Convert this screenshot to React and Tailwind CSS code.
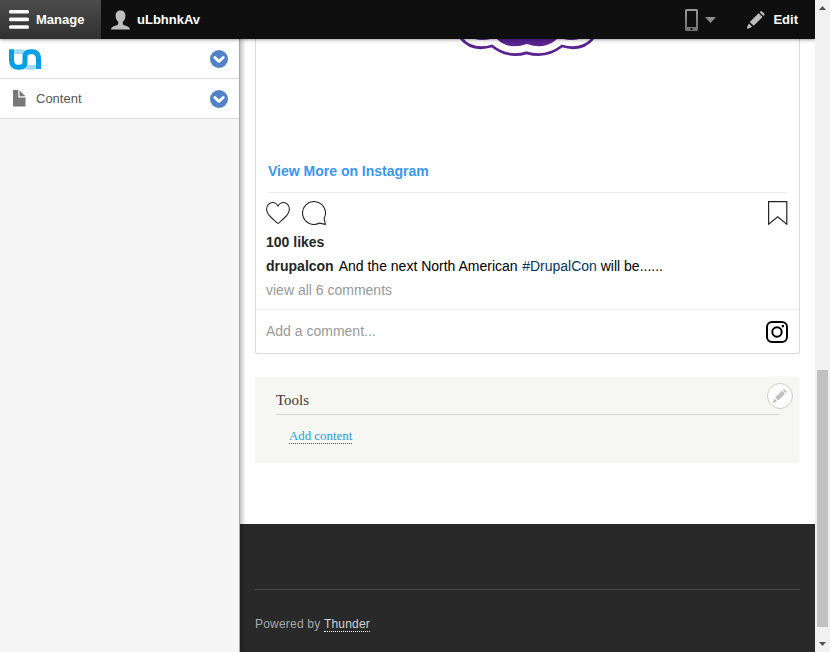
import React from "react";

function Toggle() {
  return (
    <svg width="18" height="18" viewBox="0 0 18 18" className="shrink-0">
      <circle cx="9" cy="9" r="9" fill="#5181c6" />
      <path d="M4.8 7.5 9 11.3l4.2-3.800" fill="none" stroke="#fff" strokeWidth="2.900" strokeLinecap="round" strokeLinejoin="round" />
    </svg>
  );
}

function Pencil({ size, color }) {
  return (
    <svg width={size} height={size} viewBox="0 0 18 18" fill={color} className="shrink-0">
      <path d="M12.600 1.200 13.500.4Q14.300-.2 15.100.5L17.100 2.500Q18 3.500 17.200 4.200L16.400 5ZM11.600 2.200 15.500 6 6.700 14.800 2.800 11ZM1.900 12.400 5.200 15.700 1.600 17.400.1 17.800V16Z" />
    </svg>
  );
}

function Header() {
  return (
    <header className="relative z-20 flex h-[39px] w-[815px] shrink-0 items-center bg-[#0f0f0f] text-[13px] font-bold text-white shadow-[0_0_4px_rgba(0,0,0,0.6)]">
      <div className="flex h-full w-[101px] items-center bg-linear-to-b from-[#4c4c4c] to-[#303030] pl-[9px]">
        <svg width="20" height="19" viewBox="0 0 20 19" fill="#fff">
          <rect width="20" height="3.600" rx="1.500" />
          <rect y="7.600" width="20" height="3.600" rx="1.500" />
          <rect y="15.200" width="20" height="3.600" rx="1.500" />
        </svg>
        <span className="ml-[7px]">Manage</span>
      </div>
      <svg width="19" height="20" viewBox="0 0 19 20" className="ml-[10px]" fill="#bebebe">
        <path d="M9.500.4C6.400.4 4.600 2.500 4.600 5.400c0 2.700 1.100 5.100 2.600 6.400v2.400C6.600 15.800.2 15.400 0 19.400h19c-.2-4-6.600-3.600-7.200-5.200v-2.400c1.500-1.300 2.600-3.700 2.600-6.400 0-2.900-1.800-5-4.900-5Z" />
      </svg>
      <span className="ml-[7px]">uLbhnkAv</span>
      <div className="ml-auto flex items-center">
        <svg width="32" height="22" viewBox="0 0 32 22">
          <defs>
            <linearGradient id="device" x2="0" y2="1">
              <stop stopColor="#999" />
              <stop offset="1" stopColor="#707070" />
            </linearGradient>
          </defs>
          <path fill="url(#device)" fillRule="evenodd" d="M1.500 0h10Q13 0 13 1.500v19q0 1.500-1.500 1.500h-10Q0 22 0 20.500v-19Q0 0 1.500 0ZM2 2v16h9V2Zm3.500 17v2h2v-2Z" />
          <path d="M20 8h11l-5.500 6Z" fill="#8c8c8c" />
        </svg>
        <div className="ml-[30px]"><Pencil size={18} color="#bebebe" /></div>
        <span className="mr-[17px] ml-[8px]">Edit</span>
      </div>
    </header>
  );
}

function Sidebar() {
  return (
    <aside className="z-10 w-[240px] shrink-0 border-r border-[#aaa] bg-[#f5f5f5] shadow-[0_0_5px_2px_rgba(0,0,0,0.3)]">
      <div className="flex h-[40px] items-center justify-between border-b border-[#ddd] bg-white pr-[11px] pl-[9px]">
        <svg width="32" height="21" viewBox="0 0 32 21" fill="none" className="mt-[2px]">
          <path d="M5 .8Q6.500.2 8 .2h4Q17 .2 19.500 4L16 8.500Q14.500 5 11 5H5ZM13.500 14.500Q16 16 19 16h8v4q-1 .8-2.500.8H20q-4.500 0-7-4Z" fill="#a2dafa" />
          <path d="M2.500.3V11Q2.500 18.200 9 18.200h1.500Q16 18.200 16 13V8Q16 2.800 21.500 2.800H23Q29.500 2.800 29.500 10v10" stroke="#059fe6" strokeWidth="5" />
        </svg>
        <Toggle />
      </div>
      <div className="flex h-[40px] items-center border-b border-[#ddd] bg-white pr-[11px] pl-[13px]">
        <svg width="13" height="17" viewBox="0 0 13 17" fill="#787878">
          <path d="M0 0h5.300v7.500h7.200V16.500H0ZM6.500.5l6 5.800h-6Z" />
        </svg>
        <span className="mr-auto ml-[10px] text-[13px] text-[#565656]">Content</span>
        <Toggle />
      </div>
    </aside>
  );
}

function Post() {
  return (
    <article className="h-[315px] shrink-0 rounded-b-[3px] border border-t-0 border-[#dbdbdb] text-[14px] leading-[24px]">
      <div className="h-[120px] pl-[199px]">
        <svg width="146" height="22" viewBox="0 0 146 22">
          <g fill="none" stroke="#5a2390" strokeWidth="2.800">
            <path d="M5-2Q16 13 37 7Q53 19.500 71.500 13.800Q91 19.500 107 7Q128 13 139-2" />
            <path d="M18-2Q26 .8 36-1.500M108-1.500Q118 .8 126-2" />
          </g>
          <path d="M41-1h62Q91 11.500 72 5Q52 11.500 41-1Z" fill="#5a2390" />
        </svg>
      </div>
      <div className="mx-[12px] h-[34px] border-b border-[#efefef] font-bold text-[#3897f0]">View More on Instagram</div>
      <div className="mx-[10px] flex h-[37px] pt-[8px]">
        <svg width="24" height="24" viewBox="0 0 24 24" fill="none" stroke="#262626" strokeWidth="1.100">
          <path d="M12 5C10.700 2.600 9 1.500 6.700 1.500 3.300 1.500.6 4.200.6 8.300c0 3.500 1.800 5.600 4.600 8.200 2.400 2.200 4.400 4.100 6.200 5.700q.6.5 1.200 0c1.800-1.600 3.800-3.500 6.200-5.700 2.800-2.600 4.600-4.700 4.600-8.200 0-4.100-2.700-6.800-6.100-6.800C15 1.500 13.300 2.600 12 5Z" />
        </svg>
        <svg width="24" height="24" viewBox="0 0 24 24" fill="none" stroke="#262626" strokeWidth="1.100" className="ml-[12px]">
          <path d="M22.100 17.400A11.450 11.450 0 1 0 17.400 22.100L23.400 23.400Z" strokeLinejoin="round" />
        </svg>
        <svg width="20" height="24" viewBox="0 0 20 24" fill="none" stroke="#262626" strokeWidth="1.200" className="mr-[1px] ml-auto">
          <path d="M.6.600h18.200V23.200L9.700 15.700.6 23.200Z" />
        </svg>
      </div>
      <div className="h-[80px] border-b border-[#efefef] px-[10px]">
        <div className="font-bold text-[#262626]">100 likes</div>
        <div className="text-black"><b className="mr-[5px] text-[#262626]">drupalcon</b>And the next North American <span className="ml-[0.6px] text-[#003569]">#DrupalCon</span> will be......</div>
        <div className="text-[#999]">view all 6 comments</div>
      </div>
      <div className="flex h-[43px] items-center pr-[11px] pl-[10px] text-[#999]">
        <span className="mb-[2px]">Add a comment...</span>
        <svg width="22" height="22" viewBox="0 0 22 22" fill="none" stroke="#000" strokeWidth="2" className="ml-auto">
          <rect x="1" y="1" width="20" height="20" rx="5" />
          <circle cx="11" cy="11" r="4.700" />
          <circle cx="16.900" cy="5.100" r="1.300" fill="#000" stroke="none" />
        </svg>
      </div>
    </article>
  );
}

function Tools() {
  return (
    <section className="relative mt-[22px] h-[88px] shrink-0 border border-[#f9f9f9] bg-[#f6f6f2] px-[20px] pt-[13px] font-['Liberation_Serif',serif]">
      <h2 className="h-[25px] border-b border-[#d6d6d6] text-[15px] leading-[21px] text-[#3b3b3b]">Tools</h2>
      <a className="mt-[14px] ml-[13px] inline-block border-b border-dotted border-[#0071b3] text-[12.86px] leading-[14px] text-[#1b9fdc]">Add content</a>
      <button className="absolute top-[6px] right-[6px] flex size-[26px] items-center justify-center rounded-full border border-[#ccc] bg-white">
        <Pencil size={14} color="#bebebe" />
      </button>
    </section>
  );
}

function Footer() {
  return (
    <footer className="h-[128px] shrink-0 bg-[#292929] px-[15px] pt-[65px]">
      <div className="border-t border-[#494949] pt-[27px] text-[12px] leading-[14px] tracking-[0.2px] text-[#a8a8a8]">
        Powered by <a className="inline-block border-b border-dotted border-white text-[#d4d4d4]">Thunder</a>
      </div>
    </footer>
  );
}

function Scrollbar() {
  return (
    <div className="z-30 flex w-[15px] shrink-0 flex-col bg-[#f1f1f1]">
      <svg width="15" height="16" viewBox="0 0 15 16"><path d="M4 10 7.500 6 11 10Z" fill="#505050" /></svg>
      <div className="mt-[354px] ml-[2px] h-[257px] w-[11px] bg-[#c1c1c1]" />
      <svg width="15" height="16" viewBox="0 0 15 16" className="mt-[8px]"><path d="M4 7h7L7.500 11Z" fill="#505050" /></svg>
    </div>
  );
}

export default function App() {
  return (
    <div className="flex h-[652px] w-[830px] overflow-hidden bg-white font-['Liberation_Sans',Arial,sans-serif]">
      <div className="flex w-[815px] shrink-0 flex-col">
        <Header />
        <div className="flex h-[613px]">
          <Sidebar />
          <main className="flex w-[575px] flex-col">
            <div className="flex h-[485px] shrink-0 flex-col px-[15px]">
              <Post />
              <Tools />
            </div>
            <Footer />
          </main>
        </div>
      </div>
      <Scrollbar />
    </div>
  );
}
